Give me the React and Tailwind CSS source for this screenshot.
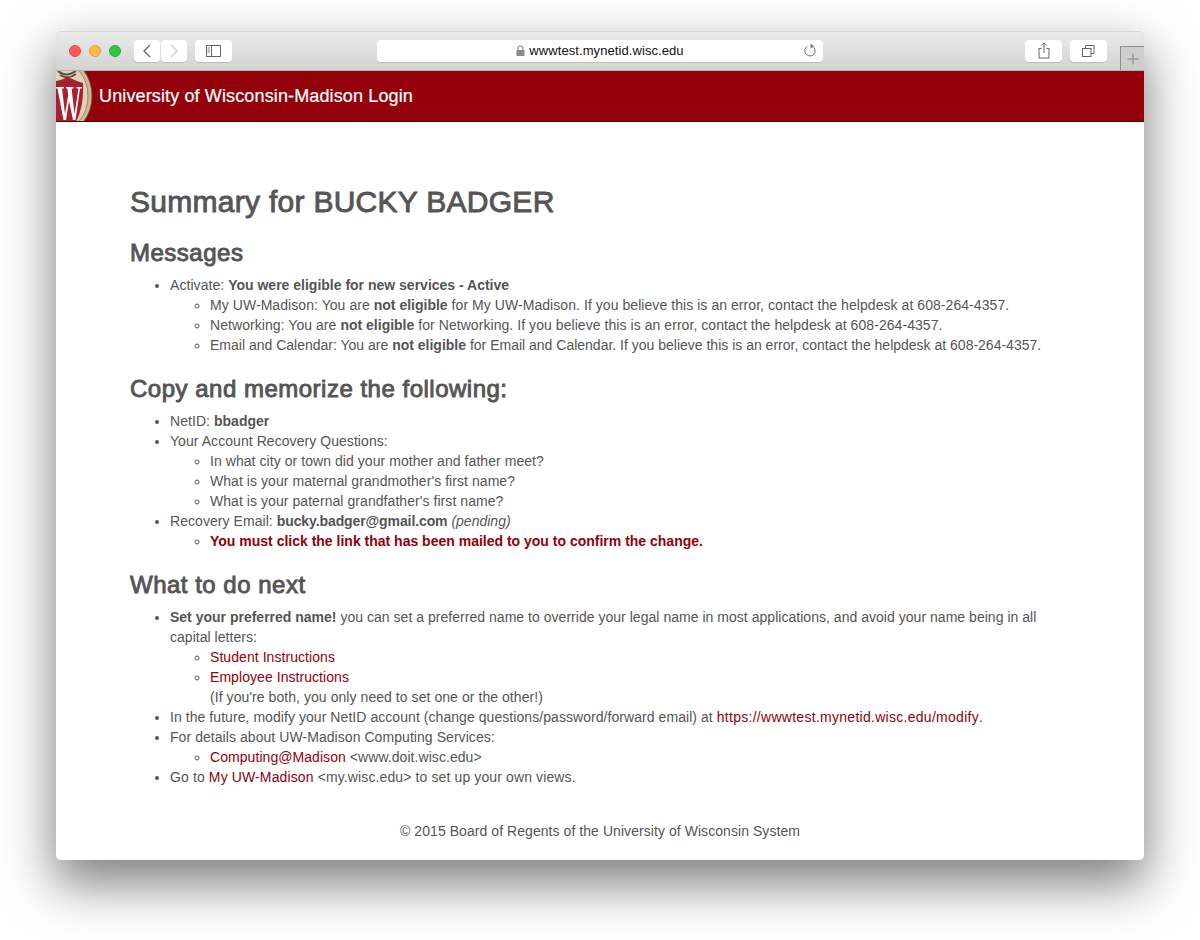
import React from 'react';

function Crest() {
  return (
    <svg width="38" height="51" viewBox="0 0 38 51" className="shrink-0">
      <ellipse cx="8" cy="25" rx="28" ry="36" fill="#cdb994" stroke="#6d5a44" strokeWidth="1" />
      <ellipse cx="8" cy="25" rx="24" ry="32" fill="#e2d3b6" stroke="#9a8869" strokeWidth="1" />
      <path d="M2 0 Q10 7 20 0 M4 4 Q12 9 20 3" fill="none" stroke="#5c5044" strokeWidth="2" />
      <path d="M-2 10 Q4 10 12 6 Q20 10 27 12 Q28 36 20 51 L-2 51 Z" fill="#a81f2d" />
      <path d="M0 16 H8 V17.500 H6 L9 43 L12.200 24 L11.400 17.500 H10 V16 H17.500 V17.500 H15.600 L18.500 43 L22.500 17.500 H20.500 V16 H26 V17.500 H24 L19.500 49 H17 L13 30 L10 49 H7.500 L1.500 17.500 H0 Z" fill="#fff" />
    </svg>
  );
}

function ToolButton({ className, children }) {
  return (
    <div className={`h-[22px] bg-white rounded-[4px] shadow-[0_1px_0_rgba(0,0,0,0.12)] flex items-center justify-center ${className}`}>
      {children}
    </div>
  );
}

function Toolbar() {
  return (
    <div className="relative h-[40px] flex items-center pl-[13px] border-b border-[#b4b4b4] rounded-t-[5px] bg-gradient-to-b from-[#ebebeb] to-[#d3d3d3] shadow-[inset_0_1px_0_#d8d8d8]">
      <div className="flex gap-2 mr-[13px]">
        <span className="w-3 h-3 rounded-full bg-[#fc5b57] border border-[#e5453f]"></span>
        <span className="w-3 h-3 rounded-full bg-[#fdbb40] border border-[#dea234]"></span>
        <span className="w-3 h-3 rounded-full bg-[#33c748] border border-[#27aa35]"></span>
      </div>
      <div className="flex gap-[1px] mr-2">
        <ToolButton className="w-[26px]">
          <svg width="10" height="14" viewBox="0 0 10 14" fill="none" stroke="#666" strokeWidth="1.300"><path d="M8 1 L2 7 L8 13" /></svg>
        </ToolButton>
        <ToolButton className="w-[26px]">
          <svg width="10" height="14" viewBox="0 0 10 14" fill="none" stroke="#ccc" strokeWidth="1.300"><path d="M2 1 L8 7 L2 13" /></svg>
        </ToolButton>
      </div>
      <ToolButton className="w-[37px] mr-[145px]">
        <svg width="15" height="12" viewBox="0 0 15 12" fill="none" stroke="#666"><rect x="0.500" y="0.500" width="14" height="11" /><path d="M5.500 0.500 V11.500" /><path d="M1.500 3 H4 M1.500 5 H4 M1.500 7 H4" strokeWidth="0.800" /></svg>
      </ToolButton>
      <ToolButton className="relative w-[446px] mr-[202px]">
        <svg width="9" height="11" viewBox="0 0 9 11" className="mr-[4px]"><path d="M2 5 V3.500 a2.500 2.500 0 0 1 5 0 V5" fill="none" stroke="#8a8a8a" strokeWidth="1.100" /><rect x="0.500" y="5" width="8" height="6" rx="0.500" fill="#8a8a8a" /></svg>
        <span className="text-[13px] tracking-[0.08px] text-[#111]">wwwtest.mynetid.wisc.edu</span>
        <svg width="14" height="15" viewBox="0 0 14 15" fill="none" className="absolute right-[6px] top-[3px]"><path d="M9.500 3.200 A5.200 5.200 0 1 1 4.500 3.200" stroke="#777" strokeWidth="1" /><path d="M7.500 0.500 L11 3.200 L7.500 5.500 Z" fill="#777" /></svg>
      </ToolButton>
      <ToolButton className="w-[37px] mr-[8px]">
        <svg width="12" height="17" viewBox="0 0 12 17" fill="none" stroke="#666"><path d="M3.500 6.500 H1 V16 H11 V6.500 H8.500" /><path d="M6 11 V1 M3.500 3.200 L6 0.800 L8.500 3.200" /></svg>
      </ToolButton>
      <ToolButton className="w-[37px]">
        <svg width="13" height="12" viewBox="0 0 13 12" fill="none" stroke="#666"><rect x="0.500" y="3.500" width="8.500" height="8" /><path d="M3.500 3.500 V0.500 H12 V8.500 H9" /></svg>
      </ToolButton>
      <div className="absolute right-0 top-[15px] w-6 h-6 bg-[#cecece] border-l border-t border-[#8f8f8f] flex items-center justify-center">
        <svg width="12" height="12" viewBox="0 0 12 12" stroke="#808080"><path d="M6 0.500 V11.500 M0.500 6 H11.500" /></svg>
      </div>
    </div>
  );
}

function App() {
  return (
    <div className="h-[940px] overflow-hidden bg-white pt-[31px] px-[56px] font-['Liberation_Sans',sans-serif] text-[14px] leading-[20px] tracking-[0.06px] text-[#555]">
      <div className="h-[829px] rounded-[5px] bg-white shadow-[0_22px_50px_2px_rgba(0,0,0,0.5)]">
        <Toolbar />
        <div className="h-[51px] flex items-center overflow-hidden bg-[#940009] border-b border-[#5c0006]">
          <Crest />
          <span className="ml-[5px] text-[18px] tracking-[0.13px] [-webkit-text-stroke:0.2px_white] text-white">University of Wisconsin-Madison Login</span>
        </div>

        <div className="pl-[74px] pr-[100px] pt-[61px]">
          <h1 className="text-[30px] leading-[38px] tracking-[0.28px] [-webkit-text-stroke:0.9px_#555]">Summary for BUCKY BADGER</h1>
          <h2 className="mt-[17px] text-[24px] leading-[30px] tracking-[0.5px] [-webkit-text-stroke:0.9px_#555]">Messages</h2>
          <ul className="mt-[7px] pl-[40px] list-disc">
            <li>
              Activate: <b className="tracking-normal">You were eligible for new services - Active</b>
              <ul className="pl-[40px] list-[circle]">
                <li>My UW-Madison: You are <b className="tracking-normal">not eligible</b> for My UW-Madison. If you believe this is an error, contact the helpdesk at 608-264-4357.</li>
                <li>Networking: You are <b className="tracking-normal">not eligible</b> for Networking. If you believe this is an error, contact the helpdesk at 608-264-4357.</li>
                <li className="tracking-normal">Email and Calendar: You are <b>not eligible</b> for Email and Calendar. If you believe this is an error, contact the helpdesk at 608-264-4357.</li>
              </ul>
            </li>
          </ul>

          <h2 className="mt-[19px] text-[24px] leading-[30px] tracking-[0.5px] [-webkit-text-stroke:0.9px_#555]">Copy and memorize the following:</h2>
          <ul className="mt-[7px] pl-[40px] list-disc">
            <li>NetID: <b className="tracking-normal">bbadger</b></li>
            <li>
              Your Account Recovery Questions:
              <ul className="pl-[40px] list-[circle]">
                <li>In what city or town did your mother and father meet?</li>
                <li>What is your maternal grandmother's first name?</li>
                <li>What is your paternal grandfather's first name?</li>
              </ul>
            </li>
            <li>
              Recovery Email: <b className="tracking-[-0.1px]">bucky.badger@gmail.com</b> <i className="tracking-normal">(pending)</i>
              <ul className="pl-[40px] list-[circle]">
                <li><b className="tracking-normal text-[#940009]">You must click the link that has been mailed to you to confirm the change.</b></li>
              </ul>
            </li>
          </ul>

          <h2 className="mt-[19px] text-[24px] leading-[30px] tracking-[0.5px] [-webkit-text-stroke:0.9px_#555]">What to do next</h2>
          <ul className="mt-[7px] pl-[40px] list-disc">
            <li>
              <span className="tracking-[0.03px]"><b className="tracking-normal">Set your preferred name!</b> you can set a preferred name to override your legal name in most applications, and avoid your name being in all capital letters:</span>
              <ul className="pl-[40px] list-[circle]">
                <li><a href="#" className="text-[#940009]">Student Instructions</a></li>
                <li>
                  <a href="#" className="text-[#940009]">Employee Instructions</a>
                  <br />
                  (If you're both, you only need to set one or the other!)
                </li>
              </ul>
            </li>
            <li>In the future, modify your NetID account (change questions/password/forward email) at <a href="#" className="tracking-[0.28px] text-[#940009]">https://wwwtest.mynetid.wisc.edu/modify</a>.</li>
            <li>
              For details about UW-Madison Computing Services:
              <ul className="pl-[40px] list-[circle]">
                <li><a href="#" className="text-[#940009]">Computing@Madison</a> &lt;www.doit.wisc.edu&gt;</li>
              </ul>
            </li>
            <li className="tracking-[0.12px]">Go to <a href="#" className="text-[#940009]">My UW-Madison</a> &lt;my.wisc.edu&gt; to set up your own views.</li>
          </ul>
        </div>

        <p className="mt-[34px] text-center">© 2015 Board of Regents of the University of Wisconsin System</p>
      </div>
    </div>
  );
}

export default App;
